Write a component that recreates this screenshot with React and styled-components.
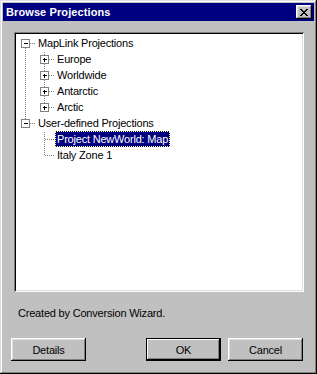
import React from "react";
import styled, { createGlobalStyle } from "styled-components";

const GlobalStyle = createGlobalStyle`
  html, body { margin: 0; padding: 0; background: #c0c0c0; }
  body { font-family: "Liberation Sans", Arial, sans-serif; font-size: 11px; letter-spacing: -0.2px; }
  * { box-sizing: border-box; }
`;

const Window = styled.div`
  width: 317px;
  height: 374px;
  background: #c0c0c0;
  padding: 3px;
  display: flex;
  flex-direction: column;
  box-shadow: inset -1px -1px #000, inset 1px 1px #dfdfdf,
    inset -2px -2px #808080, inset 2px 2px #fff;
  color: #000;
`;

const TitleBar = styled.div`
  height: 18px;
  background: #000080;
  display: flex;
  align-items: center;
  justify-content: space-between;
  padding: 0 2px 0 3px;
`;

const Title = styled.span`
  color: #fff;
  font-weight: bold;
  font-size: 11px;
  letter-spacing: 0.1px;
`;

const CloseButton = styled.div`
  width: 16px;
  height: 14px;
  background: #c0c0c0;
  display: flex;
  align-items: center;
  justify-content: center;
  box-shadow: inset -1px -1px #000, inset 1px 1px #fff,
    inset -2px -2px #808080, inset 2px 2px #dfdfdf;
`;

const Body = styled.div`
  display: flex;
  flex-direction: column;
  flex: 1;
`;

const TreeBox = styled.div`
  margin: 11px 0 0 11px;
  width: 290px;
  height: 260px;
  background: #fff;
  padding: 3px 2px 2px 2px;
  box-shadow: inset 1px 1px #808080, inset -1px -1px #fff,
    inset 2px 2px #000, inset -2px -2px #dfdfdf;
  overflow: hidden;
`;

const Row = styled.div`
  display: flex;
  align-items: center;
  height: 16px;
`;

const Label = styled.span`
  height: 16px;
  line-height: 16px;
  padding: 0 2px;
  white-space: nowrap;
  background: ${(p) => (p.$selected ? "#000080" : "transparent")};
  color: ${(p) => (p.$selected ? "#fff" : "#000")};
  outline: ${(p) => (p.$selected ? "1px dotted #ffff80" : "none")};
  outline-offset: -1px;
`;

const Status = styled.div`
  margin: 15px 0 0 15px;
  height: 13px;
  line-height: 13px;
`;

const ButtonRow = styled.div`
  display: flex;
  gap: 7px;
  margin: 18px 0 0 8px;
  padding-right: 11px;
`;

const Spacer = styled.div`
  flex: 1;
`;

const Button = styled.div`
  width: 75px;
  height: 23px;
  background: #c0c0c0;
  display: flex;
  align-items: center;
  justify-content: center;
  box-shadow: ${(p) =>
    p.$default
      ? "inset 0 0 0 1px #000, inset -2px -2px #000, inset 2px 2px #fff, inset -3px -3px #808080"
      : "inset -1px -1px #000, inset 1px 1px #fff, inset -2px -2px #808080, inset 2px 2px #dfdfdf"};
`;

const IND = 19;

const data = [
  {
    label: "MapLink Projections",
    expanded: true,
    children: [
      { label: "Europe", collapsed: true },
      { label: "Worldwide", collapsed: true },
      { label: "Antarctic", collapsed: true },
      { label: "Arctic", collapsed: true },
    ],
  },
  {
    label: "User-defined Projections",
    expanded: true,
    children: [
      { label: "Project NewWorld: Map", selected: true },
      { label: "Italy Zone 1" },
    ],
  },
];

function flatten(nodes, level, ancestors, out) {
  nodes.forEach((n, i) => {
    const isLast = i === nodes.length - 1;
    out.push({
      ...n,
      level,
      ancestors,
      isFirstRoot: level === 0 && i === 0,
      isLast,
      hasBox: n.expanded || n.collapsed,
    });
    if (n.children) flatten(n.children, level + 1, [...ancestors, !isLast], out);
  });
  return out;
}

const rows = flatten(data, 0, [], []);

const DOT = "#808080";

function Gutter({ row }) {
  const w = 20 + IND * row.level;
  const cx = 9 + IND * row.level;
  const lines = [];
  row.ancestors.forEach((cont, a) => {
    if (cont) {
      const x = 9 + IND * a + 0.5;
      lines.push(<line key={"a" + a} x1={x} y1={1} x2={x} y2={16} />);
    }
  });
  if (!row.isFirstRoot) lines.push(<line key="t" x1={cx + 0.5} y1={1} x2={cx + 0.5} y2={8} />);
  if (!row.isLast) lines.push(<line key="b" x1={cx + 0.5} y1={9} x2={cx + 0.5} y2={16} />);
  lines.push(<line key="h" x1={cx + 1} y1={8.5} x2={cx + 11} y2={8.5} />);
  return (
    <svg width={w} height={16} style={{ flex: "none", display: "block" }} shapeRendering="crispEdges">
      <g stroke={DOT} strokeWidth="1" strokeDasharray="1 1">{lines}</g>
      {row.hasBox && (
        <g>
          <rect x={cx - 3.5} y={4.5} width={8} height={8} fill="#fff" stroke={DOT} />
          <line x1={cx - 1.5} y1={8.5} x2={cx + 2.5} y2={8.5} stroke="#000" />
          {row.collapsed && <line x1={cx + 0.5} y1={6.5} x2={cx + 0.5} y2={10.5} stroke="#000" />}
        </g>
      )}
    </svg>
  );
}

export default function App() {
  return (
    <>
      <GlobalStyle />
      <Window>
        <TitleBar>
          <Title>Browse Projections</Title>
          <CloseButton>
            <svg width="8" height="7" viewBox="0 0 8 7" shapeRendering="crispEdges">
              <path d="M0 0h2v1h1v1h2V1h1V0h2v1H7v1H6v1H5v1h1v1h1v1h1v1H6V6H5V5H3v1H2v1H0V6h1V5h1V4h1V3H2V2H1V1H0z" fill="#000" />
            </svg>
          </CloseButton>
        </TitleBar>
        <Body>
          <TreeBox>
            {rows.map((r, i) => (
              <Row key={i}>
                <Gutter row={r} />
                <Label $selected={r.selected}>{r.label}</Label>
              </Row>
            ))}
          </TreeBox>
          <Status>Created by Conversion Wizard.</Status>
          <ButtonRow>
            <Button>Details</Button>
            <Spacer />
            <Button $default>OK</Button>
            <Button>Cancel</Button>
          </ButtonRow>
        </Body>
      </Window>
    </>
  );
}
